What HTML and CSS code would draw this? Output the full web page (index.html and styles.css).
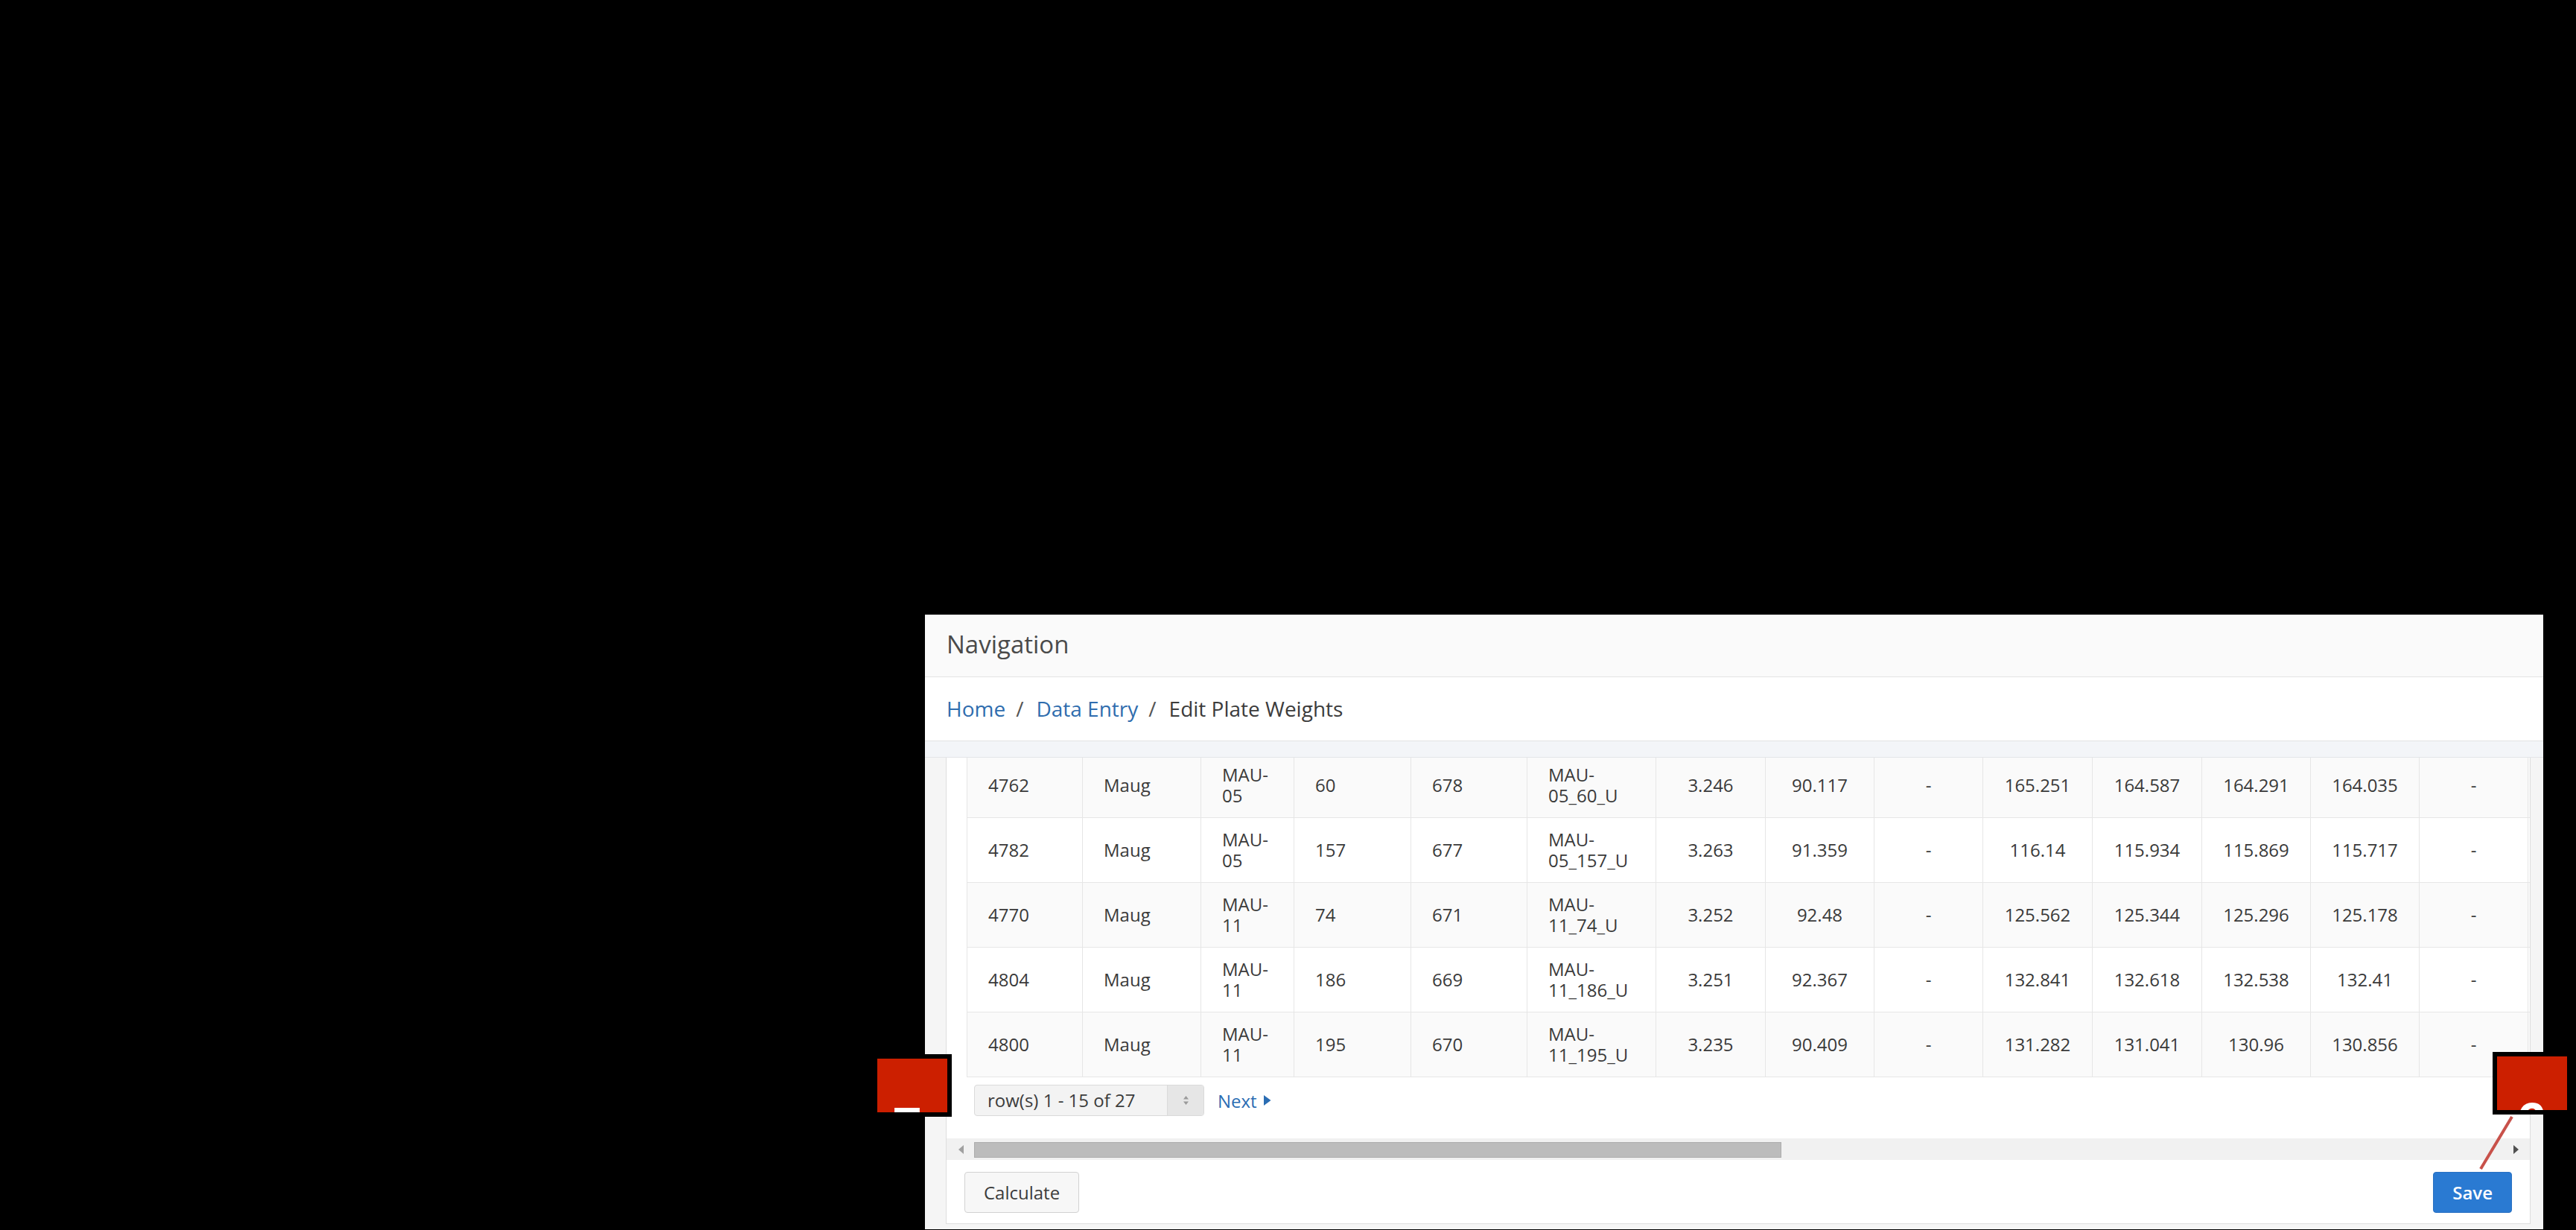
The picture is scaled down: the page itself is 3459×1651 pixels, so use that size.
FILE: index.html
```html
<!DOCTYPE html>
<html lang="en">
<head>
<meta charset="utf-8">
<title>Edit Plate Weights</title>
<link rel="stylesheet" href="styles.css">
</head>
<body>
<div class="stage">
  <section class="panel">
    <header class="panel-head">Navigation</header>
    <nav class="crumbs">
      <a class="crumb-link" href="#">Home</a><span class="sep">/</span><a class="crumb-link" href="#">Data Entry</a><span class="sep">/</span><span class="crumb-current">Edit Plate Weights</span>
    </nav>
    <div class="band"></div>
    <div class="body">
      <div class="report">
        <div class="scroller">
          <table class="grid">
            <colgroup>
              <col class="w155"><col class="w159"><col class="w125"><col class="w157"><col class="w156"><col class="w173"><col class="w147"><col class="w146"><col class="w146"><col class="w147"><col class="w147"><col class="w146"><col class="w146"><col class="w146"><col class="w146">
            </colgroup>
            <tbody>
              <tr>
                <td>4762</td><td>Maug</td><td>MAU-05</td><td>60</td><td>678</td><td>MAU-05_60_U</td>
                <td class="c">3.246</td><td class="c">90.117</td><td class="c">-</td><td class="c">165.251</td><td class="c">164.587</td><td class="c">164.291</td><td class="c">164.035</td><td class="c">-</td><td class="c"></td>
              </tr>
              <tr>
                <td>4782</td><td>Maug</td><td>MAU-05</td><td>157</td><td>677</td><td>MAU-05_157_U</td>
                <td class="c">3.263</td><td class="c">91.359</td><td class="c">-</td><td class="c">116.14</td><td class="c">115.934</td><td class="c">115.869</td><td class="c">115.717</td><td class="c">-</td><td class="c"></td>
              </tr>
              <tr>
                <td>4770</td><td>Maug</td><td>MAU-11</td><td>74</td><td>671</td><td>MAU-11_74_U</td>
                <td class="c">3.252</td><td class="c">92.48</td><td class="c">-</td><td class="c">125.562</td><td class="c">125.344</td><td class="c">125.296</td><td class="c">125.178</td><td class="c">-</td><td class="c"></td>
              </tr>
              <tr>
                <td>4804</td><td>Maug</td><td>MAU-11</td><td>186</td><td>669</td><td>MAU-11_186_U</td>
                <td class="c">3.251</td><td class="c">92.367</td><td class="c">-</td><td class="c">132.841</td><td class="c">132.618</td><td class="c">132.538</td><td class="c">132.41</td><td class="c">-</td><td class="c"></td>
              </tr>
              <tr>
                <td>4800</td><td>Maug</td><td>MAU-11</td><td>195</td><td>670</td><td>MAU-11_195_U</td>
                <td class="c">3.235</td><td class="c">90.409</td><td class="c">-</td><td class="c">131.282</td><td class="c">131.041</td><td class="c">130.96</td><td class="c">130.856</td><td class="c">-</td><td class="c"></td>
              </tr>
            </tbody>
          </table>
          <div class="pager">
            <div class="rowsel">
              <span class="rowsel-text">row(s) 1 - 15 of 27</span>
              <span class="rowsel-arrow">
                <svg width="9" height="14" viewBox="0 0 9 14"><path d="M4.5 1 L8 5.5 H1 Z M4.5 13 L8 8.5 H1 Z" fill="#9a9a9a"/></svg>
              </span>
            </div>
            <a class="next" href="#">Next<svg class="next-tri" width="11" height="16" viewBox="0 0 11 16"><path d="M1 1 L10.5 8 L1 15 Z" fill="#2b6db3"/></svg></a>
          </div>
        </div>
        <div class="hscroll">
          <span class="hs-btn"><svg width="10" height="14" viewBox="0 0 10 14"><path d="M9 1 L2 7 L9 13 Z" fill="#a0a0a0"/></svg></span>
          <div class="hs-track"><div class="hs-thumb"></div></div>
          <span class="hs-btn"><svg width="10" height="14" viewBox="0 0 10 14"><path d="M1 1 L8 7 L1 13 Z" fill="#505050"/></svg></span>
        </div>
        <div class="actions">
          <button class="btn" type="button">Calculate</button>
          <button class="btn btn-primary" type="button">Save</button>
        </div>
      </div>
    </div>
  </section>

  <div class="callout callout-left"><div class="callout-red"><span class="callout-num num-left">7</span></div></div>
  <div class="callout callout-right"><div class="callout-red"><span class="callout-num num-right">6</span></div></div>
  <svg class="leader" width="60" height="80" viewBox="0 0 60 80"><line x1="47" y1="3" x2="5" y2="73" stroke="#c8514a" stroke-width="4"/></svg>
</div>
</body>
</html>
```

FILE: styles.css
```css
* { box-sizing: border-box; }

html, body {
  margin: 0;
  padding: 0;
  background: #000;
}

body {
  width: 3459px;
  height: 1651px;
  overflow: hidden;
  font-family: "Open Sans", "Noto Sans", "Liberation Sans", sans-serif;
  color: #3c3c3c;
}

.stage {
  position: relative;
  width: 3459px;
  height: 1651px;
  padding: 825px 0 0 1242px;
}

.panel {
  width: 2173px;
  background: #f5f5f5;
  display: flex;
  flex-direction: column;
}

.panel-head {
  height: 84px;
  line-height: 79px;
  padding-left: 29px;
  font-size: 33px;
  color: #4a4a4a;
  background: #fafafa;
  border-bottom: 1px solid #e3e3e3;
}

.crumbs {
  height: 86px;
  line-height: 85px;
  padding-left: 29px;
  font-size: 28px;
  background: #fff;
  border-bottom: 1px solid #e3e3e3;
  white-space: nowrap;
}

.crumb-link {
  color: #2f6dae;
  text-decoration: none;
}

.crumb-current {
  color: #3c3c3c;
}

.sep {
  color: #555;
  margin: 0 17px 0 14px;
}

.band {
  height: 22px;
  background: #f3f5f8;
  border-bottom: 1px solid #e3e5e8;
}

.body {
  overflow: hidden;
  padding: 0 17px 7px 28px;
}

.report {
  margin-top: -8px;
  background: #fff;
  border: 1px solid #dedede;
}

.scroller {
  overflow: hidden;
  padding: 0 0 30px 27px;
}

.grid {
  table-layout: fixed;
  border-collapse: collapse;
  width: 2242px;
  font-size: 24px;
  line-height: 28px;
  color: #3a3a3a;
}

.w155 { width: 155px; }
.w159 { width: 159px; }
.w125 { width: 125px; }
.w157 { width: 157px; }
.w156 { width: 156px; }
.w173 { width: 173px; }
.w147 { width: 147px; }
.w146 { width: 146px; }

.grid td {
  border: 1px solid #e6e6e6;
  padding: 15px 18px 15px 28px;
  vertical-align: middle;
  white-space: normal;
}

.grid td.c {
  text-align: center;
  padding: 15px 4px;
}

.grid tr:nth-child(odd) td {
  background: #fafafa;
}

.pager {
  display: flex;
  align-items: center;
  margin-top: 10px;
  padding-left: 10px;
}

.rowsel {
  display: flex;
  height: 42px;
  width: 309px;
  border: 1px solid #dadada;
  border-radius: 4px;
  background: #f3f3f3;
  overflow: hidden;
}

.rowsel-text {
  flex: 1;
  padding-left: 17px;
  font-size: 24px;
  line-height: 40px;
  color: #3c3c3c;
}

.rowsel-arrow {
  width: 49px;
  display: flex;
  align-items: center;
  justify-content: center;
  background: #e6e6e6;
  border-left: 1px solid #dadada;
}

.next {
  margin-left: 18px;
  font-size: 24px;
  color: #2b6db3;
  text-decoration: none;
  display: flex;
  align-items: center;
}

.next-tri {
  margin-left: 8px;
}

.hscroll {
  display: flex;
  height: 29px;
  background: #f1f1f1;
}

.hs-btn {
  width: 37px;
  display: flex;
  align-items: center;
  justify-content: center;
}

.hs-track {
  flex: 1;
  padding-top: 5px;
}

.hs-thumb {
  width: 1084px;
  height: 21px;
  background: #bcbcbc;
  border: 1px solid #adadad;
}

.actions {
  display: flex;
  justify-content: space-between;
  padding: 16px 24px 14px 24px;
}

.btn {
  height: 55px;
  padding: 0 25px;
  font-family: "Open Sans", "Noto Sans", "Liberation Sans", sans-serif;
  font-size: 24px;
  color: #3c3c3c;
  background: #f7f7f7;
  border: 1px solid #d2d2d2;
  border-radius: 4px;
}

.btn-primary {
  color: #fff;
  font-weight: 600;
  background: #2a7ad2;
  border-color: #2870c2;
}

.callout {
  position: absolute;
  width: 106px;
  height: 84px;
  background: #000;
  padding: 6px;
}

.callout-left {
  left: 1172px;
  top: 1415px;
}

.callout-right {
  left: 3347px;
  top: 1412px;
}

.callout-red {
  position: relative;
  width: 94px;
  height: 72px;
  background: #cc1f00;
  overflow: hidden;
}

.callout-num {
  position: absolute;
  font-family: "Liberation Sans", Arial, sans-serif;
  font-weight: 700;
  font-size: 72px;
  line-height: 72px;
  color: #fff;
}

.num-left {
  left: 20px;
  top: 55px;
}

.num-right {
  left: 26px;
  top: 52px;
}

.leader {
  position: absolute;
  left: 3326px;
  top: 1496px;
}
```
